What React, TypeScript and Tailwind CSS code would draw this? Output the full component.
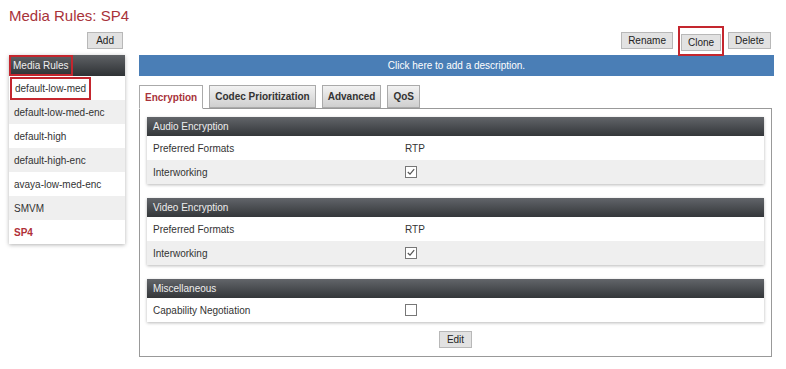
import React from "react";

const rules = [
  "default-low-med",
  "default-low-med-enc",
  "default-high",
  "default-high-enc",
  "avaya-low-med-enc",
  "SMVM",
  "SP4",
];

const Check = ({ checked }: { checked: boolean }) => (
  <svg width="12" height="12" viewBox="0 0 12 12" className="block">
    <rect x="0.5" y="0.5" width="11" height="11" fill="#fff" stroke="#777" />
    {checked && <path d="M2.8 6 L5 8.2 L9.2 3.2" fill="none" stroke="#555" strokeWidth="1.2" />}
  </svg>
);

const Btn = ({ label, className = "" }: { label: string; className?: string }) => (
  <button className={"h-[17px] px-[6px] bg-[#e2e2e2] border border-[#b8b8b8] text-[10px] leading-none text-[#222] " + className}>
    {label}
  </button>
);

const Section = ({ title, rows }: { title: string; rows: { label: string; value: React.ReactNode }[] }) => (
  <div className="shadow-[0_1px_3px_rgba(0,0,0,0.28)]">
    <div className="h-[19px] flex items-center pl-[6px] text-[10px] text-[#eee] bg-gradient-to-b from-[#62656a] to-[#34373a]">
      {title}
    </div>
    {rows.map((r, i) => (
      <div
        key={r.label}
        className={"grid grid-cols-[252px_1fr] items-center text-[10px] text-[#333] pl-[6px] h-[24px] " + (i % 2 ? "bg-[#efefef]" : "bg-white")}
      >
        <span>{r.label}</span>
        <span>{r.value}</span>
      </div>
    ))}
  </div>
);

const App: React.FC = () => {
  const tabs = ["Encryption", "Codec Prioritization", "Advanced", "QoS"];
  return (
    <div className="w-[786px] h-[369px] bg-white font-['Liberation_Sans',Arial,sans-serif] overflow-hidden">
      <h1 className="pl-[9px] pt-[7px] h-[30px] text-[15px] leading-[18px] text-[#a8323a]">Media Rules: SP4</h1>
      <div className="flex pl-[9px]">
        {/* left column */}
        <div className="w-[116px]">
          <div className="flex justify-end pr-[2px] pt-[2px] h-[25px]">
            <Btn label="Add" className="px-[8px]" />
          </div>
          <div className="shadow-[0_1px_4px_rgba(0,0,0,0.3)]">
            <div className="h-[21px] flex items-center bg-gradient-to-b from-[#5f6266] to-[#2f3235] px-[1px]">
              <span className="text-[10px] text-[#eee] px-[3px] py-[2px] outline-2 outline-[#c4262e] -outline-offset-1">
                Media Rules
              </span>
            </div>
            {rules.map((r, i) => (
              <div
                key={r}
                className={"h-[24px] flex items-center pl-[1px] text-[10px] " + (i % 2 ? "bg-[#efefef]" : "bg-white") + (r === "SP4" ? " text-[#b03038] font-bold pl-[5px]" : " text-[#333]")}
              >
                {i === 0 ? (
                  <span className="px-[3px] py-[2px] border-2 border-[#c4262e]">{r}</span>
                ) : r === "SP4" ? (
                  r
                ) : (
                  <span className="pl-[4px]">{r}</span>
                )}
              </div>
            ))}
          </div>
        </div>

        {/* right column */}
        <div className="ml-[14px] w-[635px]">
          <div className="h-[21px] flex items-center justify-end pr-[3px]">
            <Btn label="Rename" className="px-[5px]" />
            <div className="ml-[5px] border-2 border-[#c4262e] px-[1px] py-[1px]">
              <Btn label="Clone" className="px-[5px]" />
            </div>
            <Btn label="Delete" className="ml-[4px] px-[5px]" />
          </div>
          <div className="mt-[4px] h-[21px] bg-[#4a7eb6] flex items-center justify-center text-[10px] text-white">
            Click here to add a description.
          </div>
          <div className="mt-[9px] flex gap-[6px] relative z-10">
            {tabs.map((t, i) => (
              <div
                key={t}
                className={
                  "px-[5px] flex items-center text-[10px] font-bold border border-[#aaa] " +
                  (i === 0
                    ? "bg-white text-[#a8323a] border-b-white h-[24px]"
                    : "h-[23px] bg-gradient-to-b from-[#f2f2f2] to-[#cfcfcf] text-[#333]")
                }
              >
                {t}
              </div>
            ))}
          </div>
          <div className="-mt-[1px] w-[633px] border border-[#999] px-[7px] pt-[8px] pb-[8px] flex flex-col">
            <Section
              title="Audio Encryption"
              rows={[
                { label: "Preferred Formats", value: "RTP" },
                { label: "Interworking", value: <Check checked /> },
              ]}
            />
            <div className="mt-[14px]">
              <Section
                title="Video Encryption"
                rows={[
                  { label: "Preferred Formats", value: "RTP" },
                  { label: "Interworking", value: <Check checked /> },
                ]}
              />
            </div>
            <div className="mt-[14px]">
              <Section title="Miscellaneous" rows={[{ label: "Capability Negotiation", value: <Check checked={false} /> }]} />
            </div>
            <div className="mt-[9px] flex justify-center">
              <Btn label="Edit" className="px-[7px]" />
            </div>
          </div>
        </div>
      </div>
    </div>
  );
};

export default App;
